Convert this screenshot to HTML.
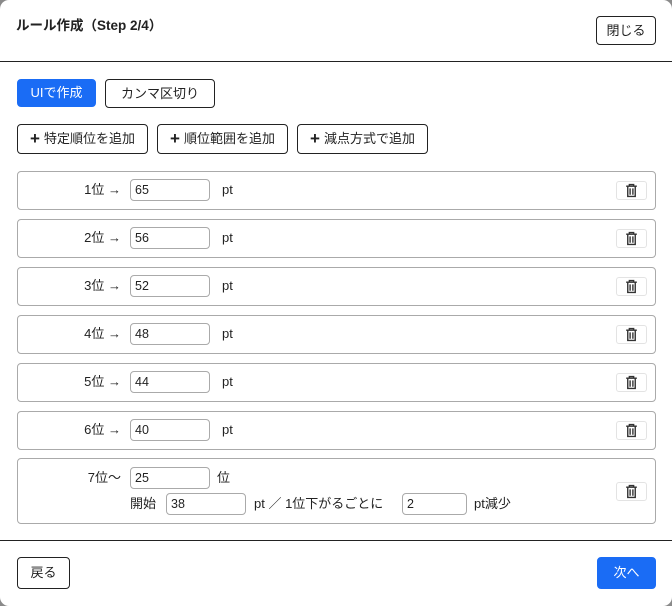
<!DOCTYPE html>
<html><head><meta charset="utf-8"><style>
*{box-sizing:border-box;margin:0;padding:0}
html,body{width:672px;height:606px;background:#8a8a8a;overflow:hidden}
body{font-family:"Liberation Sans","Noto Sans CJK JP",sans-serif;font-size:13px;color:#222}
.m{position:absolute;left:0;top:0;width:672px;height:606px;background:#fff;border-radius:9px}
.a{position:absolute;line-height:22px;height:22px}
.btn{position:absolute;border:1px solid #222;border-radius:4px;background:#fff;display:flex;align-items:center;justify-content:center;font-size:13px;line-height:16px}
.row{position:absolute;left:17px;width:639px;border:1px solid #aaa;border-radius:4px;background:#fff}
.inp{position:absolute;border:1px solid #aaa;border-radius:4px;height:22px;width:80px;padding-left:4px;line-height:20px;font-size:12.5px}
.lbl{position:absolute;left:20px;width:83px;text-align:right;line-height:22px}
.tr{position:absolute;left:598px;width:31px;height:19px;border:1px solid #e3e3e3;border-radius:3px;display:flex;align-items:center;justify-content:center}
.hr{position:absolute;left:0;width:672px;height:1px;background:#222}
.pl{font-size:17px;font-weight:bold;margin-right:4px;line-height:16px}
</style></head><body><div class="m">
<div class="a" style="left:16px;top:15px;font-weight:bold;font-size:13.5px">ルール作成（Step 2/4）</div>
<div class="btn" style="left:596px;top:16px;width:60px;height:29px">閉じる</div>
<div class="hr" style="top:61px"></div>
<div class="btn" style="left:17px;top:79px;width:79px;height:28px;background:#1a6cf5;border-color:#1a6cf5;color:#fff">UIで作成</div>
<div class="btn" style="left:105px;top:79px;width:110px;height:29px">カンマ区切り</div>
<div class="btn" style="left:17px;top:124px;width:131px;height:30px"><span class="pl">+</span>特定順位を追加</div>
<div class="btn" style="left:157px;top:124px;width:131px;height:30px"><span class="pl">+</span>順位範囲を追加</div>
<div class="btn" style="left:297px;top:124px;width:131px;height:30px"><span class="pl">+</span>減点方式で追加</div>

<div id="rows"></div>
<script>
var v=[65,56,52,48,44,40],h='';
var tr='<svg width="13" height="15" viewBox="0 0 12 14"><path d="M1 3h10M4 3V1.5h4V3M2.5 3v9.5h7V3M4.7 5v6M7.3 5v6" fill="none" stroke="#333" stroke-width="1.3"/></svg>';
for(var i=0;i<6;i++){var t=171+i*48;
h+='<div class="row" style="top:'+t+'px;height:39px"><div class="lbl" style="top:7px">'+(i+1)+'位 →</div><div class="inp" style="left:112px;top:7px">'+v[i]+'</div><div class="a" style="left:204px;top:7px">pt</div><div class="tr" style="top:9px">'+tr+'</div></div>';}
document.getElementById('rows').outerHTML=h;
</script>
<div class="row" style="top:458px;height:66px">
<div class="lbl" style="top:8px">7位〜</div><div class="inp" style="left:112px;top:8px">25</div><div class="a" style="left:199px;top:8px">位</div>
<div class="a" style="left:112px;top:34px">開始</div><div class="inp" style="left:148px;top:34px">38</div>
<div class="a" style="left:236px;top:34px">pt ／ 1位下がるごとに</div><div class="inp" style="left:384px;top:34px;width:65px">2</div>
<div class="a" style="left:456px;top:34px">pt減少</div>
<div class="tr" style="top:23px">
<svg width="13" height="15" viewBox="0 0 12 14"><path d="M1 3h10M4 3V1.5h4V3M2.5 3v9.5h7V3M4.7 5v6M7.3 5v6" fill="none" stroke="#333" stroke-width="1.3"/></svg></div></div>
<div class="hr" style="top:540px"></div>
<div class="btn" style="left:17px;top:557px;width:53px;height:32px">戻る</div>
<div class="btn" style="left:597px;top:557px;width:59px;height:32px;background:#1a6cf5;border-color:#1a6cf5;color:#fff">次へ</div>
</div></body></html>
